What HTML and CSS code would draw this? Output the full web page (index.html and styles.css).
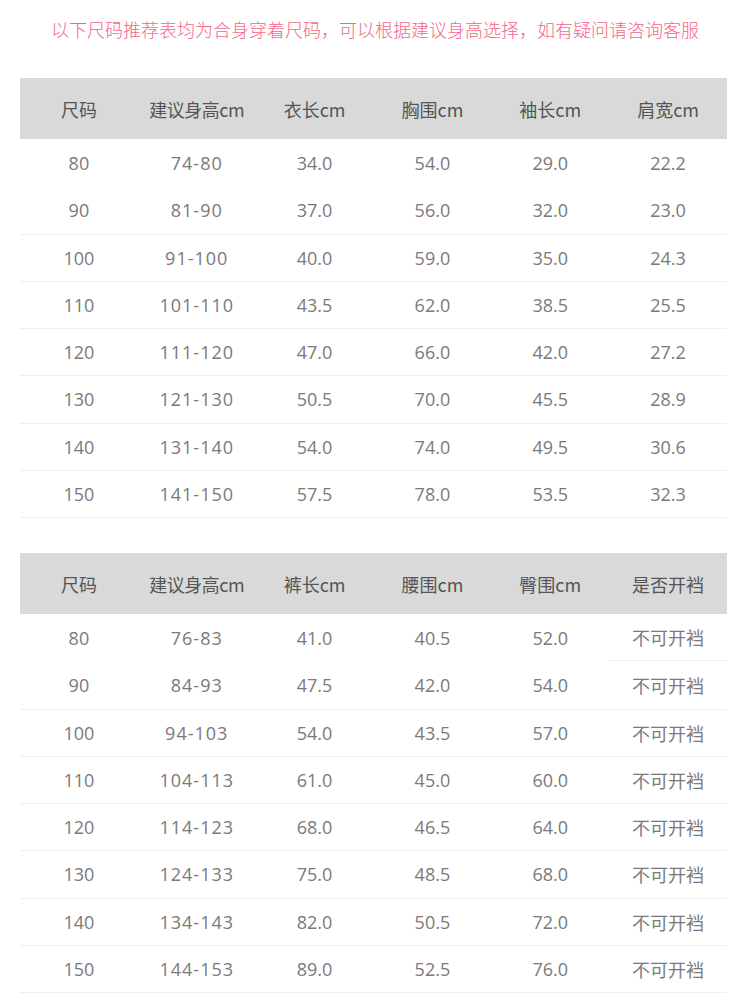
FILE: index.html
```html
<!DOCTYPE html>
<html lang="zh">
<head>
<meta charset="utf-8">
<link rel="stylesheet" href="styles.css">
</head>
<body>
<p class="title">以下尺码推荐表均为合身穿着尺码，可以根据建议身高选择，如有疑问请咨询客服</p>
<div class="table t1">
  <div class="row head"><span>尺码</span><span>建议身高cm</span><span>衣长cm</span><span>胸围cm</span><span>袖长cm</span><span>肩宽cm</span></div>
  <div class="row first"><span>80</span><span>74-80</span><span>34.0</span><span>54.0</span><span>29.0</span><span>22.2</span></div>
  <div class="row first"><span>90</span><span>81-90</span><span>37.0</span><span>56.0</span><span>32.0</span><span>23.0</span></div>
  <div class="row"><span>100</span><span>91-100</span><span>40.0</span><span>59.0</span><span>35.0</span><span>24.3</span></div>
  <div class="row"><span>110</span><span>101-110</span><span>43.5</span><span>62.0</span><span>38.5</span><span>25.5</span></div>
  <div class="row"><span>120</span><span>111-120</span><span>47.0</span><span>66.0</span><span>42.0</span><span>27.2</span></div>
  <div class="row"><span>130</span><span>121-130</span><span>50.5</span><span>70.0</span><span>45.5</span><span>28.9</span></div>
  <div class="row"><span>140</span><span>131-140</span><span>54.0</span><span>74.0</span><span>49.5</span><span>30.6</span></div>
  <div class="row"><span>150</span><span>141-150</span><span>57.5</span><span>78.0</span><span>53.5</span><span>32.3</span></div>
</div>
<div class="table t2">
  <div class="row head"><span>尺码</span><span>建议身高cm</span><span>裤长cm</span><span>腰围cm</span><span>臀围cm</span><span>是否开裆</span></div>
  <div class="row first"><span>80</span><span>76-83</span><span>41.0</span><span>40.5</span><span>52.0</span><span class="lastline">不可开裆</span></div>
  <div class="row first"><span>90</span><span>84-93</span><span>47.5</span><span>42.0</span><span>54.0</span><span>不可开裆</span></div>
  <div class="row"><span>100</span><span>94-103</span><span>54.0</span><span>43.5</span><span>57.0</span><span>不可开裆</span></div>
  <div class="row"><span>110</span><span>104-113</span><span>61.0</span><span>45.0</span><span>60.0</span><span>不可开裆</span></div>
  <div class="row"><span>120</span><span>114-123</span><span>68.0</span><span>46.5</span><span>64.0</span><span>不可开裆</span></div>
  <div class="row"><span>130</span><span>124-133</span><span>75.0</span><span>48.5</span><span>68.0</span><span>不可开裆</span></div>
  <div class="row"><span>140</span><span>134-143</span><span>82.0</span><span>50.5</span><span>72.0</span><span>不可开裆</span></div>
  <div class="row"><span>150</span><span>144-153</span><span>89.0</span><span>52.5</span><span>76.0</span><span>不可开裆</span></div>
</div>
</body>
</html>
```
FILE: styles.css
```css
html, body {
  margin: 0;
  padding: 0;
  background: #fff;
}
body {
  width: 750px;
  font-family: "Open Sans", "Noto Sans CJK SC", sans-serif;
}
.title {
  margin: 0;
  height: 78px;
  padding-top: 17px;
  box-sizing: border-box;
  text-align: center;
  font-family: "Noto Sans CJK SC", sans-serif;
  font-weight: 300;
  font-size: 18px;
  line-height: 24px;
  color: #f5668a;
  letter-spacing: 0;
}
.table {
  margin: 0 23px 0 20px;
  width: 707px;
}
.t2 {
  margin-top: 35px;
}
.row {
  display: grid;
  grid-template-columns: repeat(6, 1fr);
  height: 47.25px;
  align-items: center;
  border-top: 1px solid #efefef;
  box-sizing: border-box;
  font-size: 18px;
  color: #7a7a7a;
}
.row span {
  text-align: center;
}
.row span:nth-child(2) {
  letter-spacing: 1px;
}
.row.first {
  border-top: none;
}
.row:last-child {
  border-bottom: 1px solid #efefef;
  height: 48.25px;
}
.row.head {
  height: 61px;
  background: #d9d9d9;
  border: none;
  color: #555;
  font-size: 18px;
}
.row.head span {
  letter-spacing: 0;
  font-family: "Noto Sans CJK SC", sans-serif;
}
.row.head span:nth-child(2) {
  letter-spacing: -0.5px;
}
.t2 .row span:nth-child(6) {
  font-family: "Noto Sans CJK SC", sans-serif;
}
.lastline {
  align-self: stretch;
  display: flex;
  align-items: center;
  justify-content: center;
  border-bottom: 1px solid #efefef;
}
```
